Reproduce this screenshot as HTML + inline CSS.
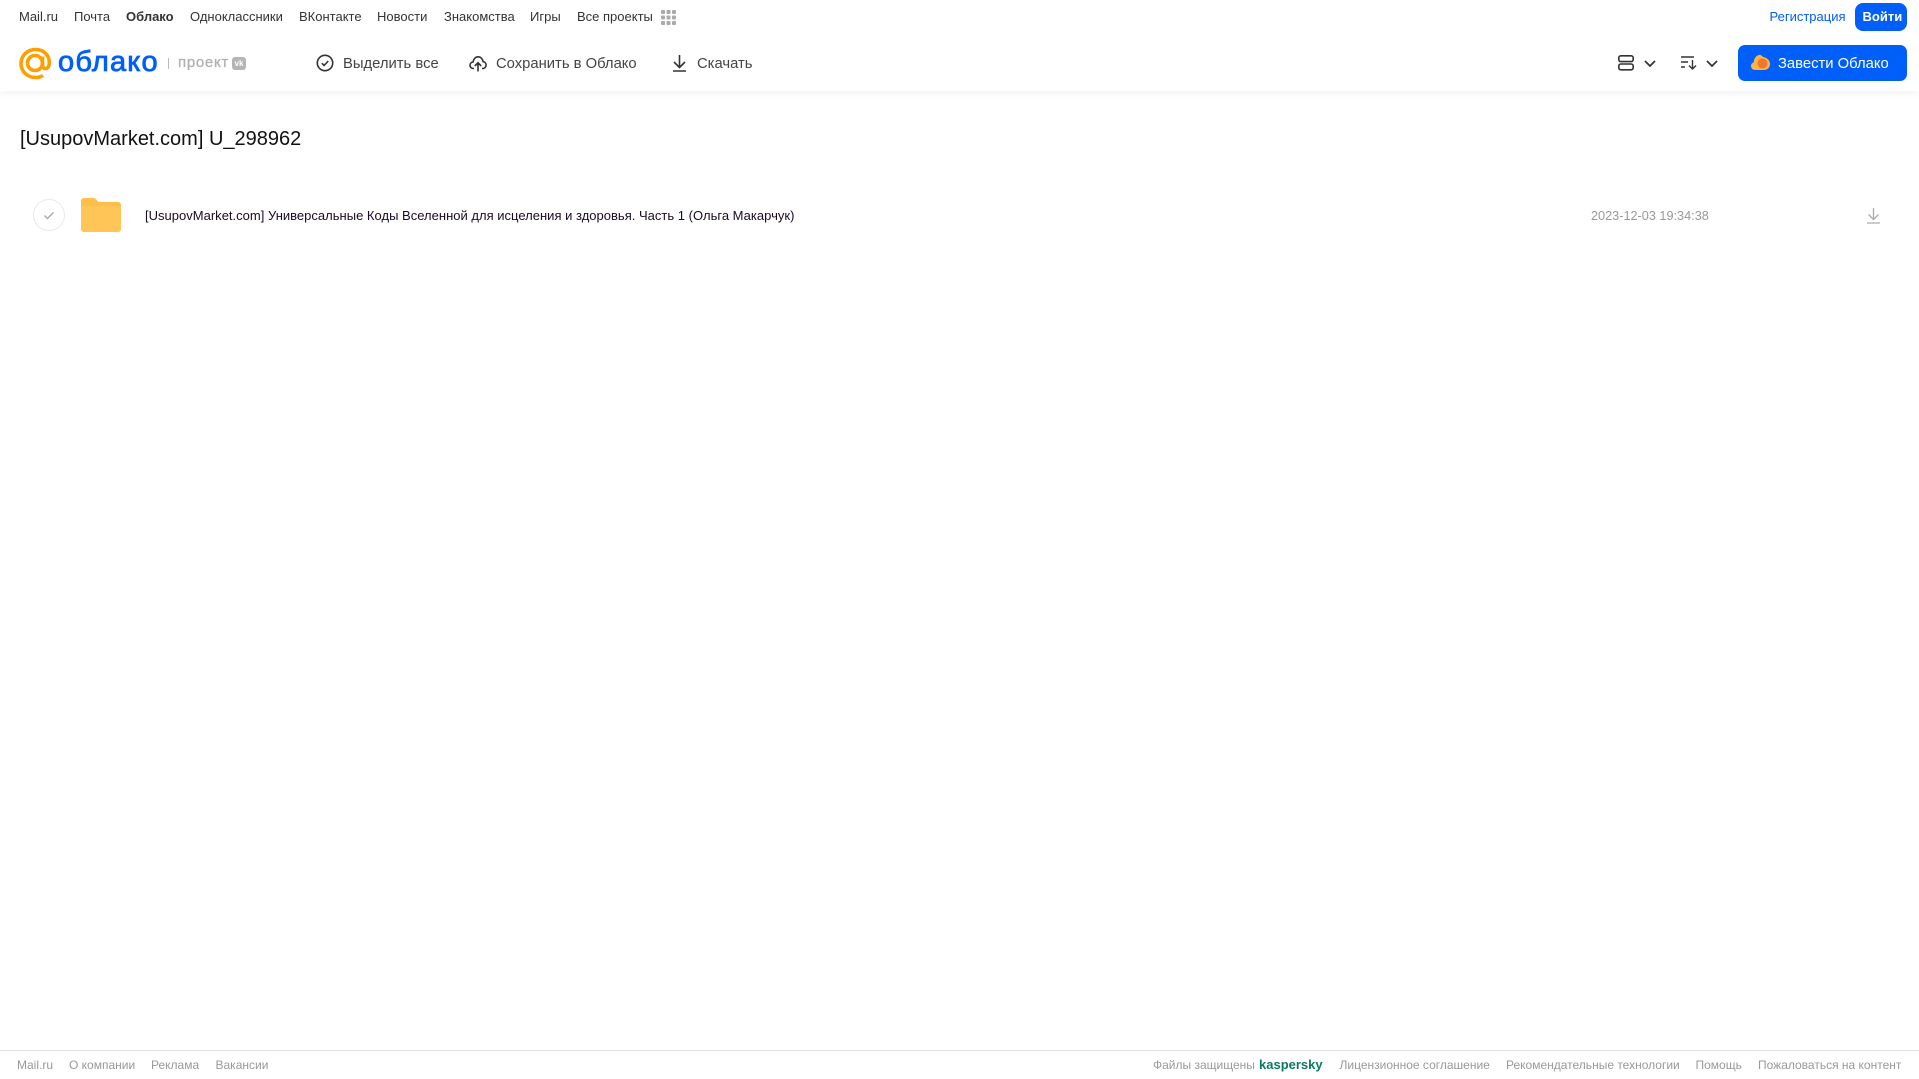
<!DOCTYPE html>
<html lang="ru"><head><meta charset="utf-8"><title>Облако</title>
<style>
html,body{margin:0;padding:0;background:#fff;width:1919px;height:1079px;overflow:hidden;font-family:"Liberation Sans",Arial,sans-serif}
.t{position:absolute;white-space:nowrap;line-height:20px;height:20px}
.n{font-size:13px;color:#333;top:7px}
.b{font-size:14.800px;color:#444;top:54px}
.f{font-size:12px;color:#999;top:1055px}
svg{position:absolute;overflow:visible}
#hd{position:absolute;left:0;top:0;width:1919px;height:91px;background:#fff;box-shadow:0 1px 10px rgba(0,0,0,.07)}
</style></head><body>
<div id="hd"></div>
<span class="t n" style="left:19px">Mail.ru</span>
<span class="t n" style="left:74px">Почта</span>
<span class="t n" style="left:126px;font-weight:bold">Облако</span>
<span class="t n" style="left:190px">Одноклассники</span>
<span class="t n" style="left:299px">ВКонтакте</span>
<span class="t n" style="left:377px">Новости</span>
<span class="t n" style="left:444px">Знакомства</span>
<span class="t n" style="left:530px">Игры</span>
<span class="t n" style="left:577px">Все проекты</span>
<svg style="left:661px;top:10px" width="15" height="15" fill="#aaa"><rect x="0" y="0" width="4" height="4" rx="1"/><rect x="5.500" y="0" width="4" height="4" rx="1"/><rect x="11" y="0" width="4" height="4" rx="1"/><rect x="0" y="5.500" width="4" height="4" rx="1"/><rect x="5.500" y="5.500" width="4" height="4" rx="1"/><rect x="11" y="5.500" width="4" height="4" rx="1"/><rect x="0" y="11" width="4" height="4" rx="1"/><rect x="5.500" y="11" width="4" height="4" rx="1"/><rect x="11" y="11" width="4" height="4" rx="1"/></svg>
<span class="t n" style="left:1769.500px;color:#005ff9">Регистрация</span>
<div style="position:absolute;left:1855px;top:3px;width:52px;height:28px;background:#005ff9;border-radius:8px"></div>
<span class="t n" style="left:1862.500px;color:#fff;font-weight:bold">Войти</span>

<svg style="left:19px;top:47px" width="33" height="33" viewBox="0 0 33 33" fill="none" stroke="#ff9e00" stroke-width="3.600"><circle cx="16" cy="16" r="7.500"/><path d="M23.500 9.500v8.500c0 5 6 5 6.700-1 .8-8.500-5.200-14.500-13.700-14.500C8.500 2.500 2 8.500 2 16.500S8.500 30.500 16.500 30.500c3 0 5.500-.8 7.500-2"/></svg>
<span class="t" style="left:58px;top:45px;height:34px;line-height:34px;font-size:29px;color:#005ff9;-webkit-text-stroke:.8px #005ff9;letter-spacing:1.200px">облако</span>
<div style="position:absolute;left:168px;top:58px;width:1px;height:11px;background:#bbb"></div>
<span class="t" style="left:178px;top:53px;font-size:15px;color:#b0b0b0;-webkit-text-stroke:.3px #b0b0b0;letter-spacing:.7px">проект</span>
<div style="position:absolute;left:232px;top:57px;width:14px;height:13px;background:#b5b5b5;border-radius:3px;color:#fff;font-size:8px;font-weight:bold;line-height:13px;text-align:center">vk</div>

<svg style="left:316px;top:54px" width="18" height="18" viewBox="0 0 18 18" fill="none" stroke="#333" stroke-width="1.600"><circle cx="9" cy="9" r="7.700"/><path d="M5.800 9.200l2.300 2.300 4.200-4.500"/></svg>
<span class="t b" style="left:343px">Выделить все</span>
<svg style="left:469px;top:55px" width="18" height="17" viewBox="0 0 18 17" fill="none" stroke="#333" stroke-width="1.600"><path d="M5 13.500H4.500C2.500 13.500 1 12 1 10.200c0-1.700 1.300-3 3-3.200C4.500 4 6.500 1.800 9 1.800c2.700 0 4.700 2 5.100 4.800 1.700.2 3 1.700 3 3.500 0 1.900-1.500 3.400-3.400 3.400H13"/><path d="M9 16.500V8M5.800 11L9 7.800l3.200 3.200"/></svg>
<span class="t b" style="left:496px">Сохранить в Облако</span>
<svg style="left:671.500px;top:54px" width="15" height="18" viewBox="0 0 15 18" fill="none" stroke="#333" stroke-width="1.600"><path d="M7.500 1v12M2 8l5.500 5.500L13 8M1 17h13"/></svg>
<span class="t b" style="left:697px">Скачать</span>

<svg style="left:1618px;top:55px" width="16" height="16" viewBox="0 0 16 16" fill="none" stroke="#333" stroke-width="1.600"><rect x=".8" y=".8" width="14.400" height="5.800" rx="2"/><rect x=".8" y="9" width="14.400" height="5.800" rx="2"/></svg>
<svg style="left:1644px;top:60px" width="12" height="7" viewBox="0 0 12 7" fill="none" stroke="#333" stroke-width="1.700"><path d="M1 1l5 5 5-5"/></svg>
<svg style="left:1681px;top:56px" width="16" height="14" viewBox="0 0 16 14" fill="none" stroke="#333" stroke-width="1.400"><path d="M0 1h13M0 6h7M0 11h4M11.500 4v9M8 9.500l3.500 3.500L15 9.500"/></svg>
<svg style="left:1706px;top:60px" width="12" height="7" viewBox="0 0 12 7" fill="none" stroke="#333" stroke-width="1.700"><path d="M1 1l5 5 5-5"/></svg>
<div style="position:absolute;left:1738px;top:45px;width:169px;height:36px;background:#005ff9;border-radius:7px"></div>
<svg style="left:1751px;top:54px" width="19" height="16" viewBox="0 0 19 16"><path d="M4 16C1.800 16 0 14.200 0 12c0-1.800 1.100-3.200 2.700-3.800C3 4.500 5 2 7.500 1 9.500.5 11 1.500 12 3c3.500.5 7 3 7 7 0 3.500-2.500 6-6 6z" fill="#ffb340"/><circle cx="11.500" cy="9.500" r="5" fill="#f4762d"/></svg>
<span class="t b" style="left:1778px;color:#fff">Завести Облако</span>

<span class="t" style="left:20px;top:127px;height:24px;line-height:24px;font-size:20px;color:#111">[UsupovMarket.com] U_298962</span>

<div style="position:absolute;left:33px;top:199px;width:30px;height:30px;border:1px solid #e9e9e9;border-radius:50%"></div>
<svg style="left:43px;top:211px" width="12" height="9" viewBox="0 0 12 9" fill="none" stroke="#a5a5a5" stroke-width="1.300"><path d="M1.500 4.500l3 3 6-6"/></svg>
<svg style="left:81px;top:198px" width="40" height="34" viewBox="0 0 40 34"><path d="M0 3a3 3 0 0 1 3-3h9c2 0 3 .8 4 2.500L17 4h20a3 3 0 0 1 3 3v24a3 3 0 0 1-3 3H3a3 3 0 0 1-3-3z" fill="#ffbe4a"/><path d="M0 8h40v23a3 3 0 0 1-3 3H3a3 3 0 0 1-3-3z" fill="#ffc557"/></svg>
<span class="t" style="left:145px;top:206px;font-size:13px;color:#1a0a26;letter-spacing:.01px">[UsupovMarket.com] Универсальные Коды Вселенной для исцеления и здоровья. Часть 1 (Ольга Макарчук)</span>
<span class="t" style="left:1591px;top:206px;font-size:12.700px;color:#999">2023-12-03 19:34:38</span>
<svg style="left:1866.500px;top:207px" width="13" height="17" viewBox="0 0 13 17" fill="none" stroke="#aaa" stroke-width="1.300"><path d="M6.500 1v11M1.500 7.500l5 5 5-5M0 16h13"/></svg>

<div style="position:absolute;left:0;top:1050px;width:1919px;height:1px;background:#ddd"></div>
<span class="t f" style="left:17px">Mail.ru</span>
<span class="t f" style="left:69px">О компании</span>
<span class="t f" style="left:151px">Реклама</span>
<span class="t f" style="left:215.500px">Вакансии</span>
<span class="t f" style="left:1153px">Файлы защищены</span>
<span class="t f" style="left:1259px;font-size:13px;font-weight:bold;color:#0b7a63">kaspersky</span>
<span class="t f" style="left:1339.500px">Лицензионное соглашение</span>
<span class="t f" style="left:1506px">Рекомендательные технологии</span>
<span class="t f" style="left:1695.500px">Помощь</span>
<span class="t f" style="left:1758px">Пожаловаться на контент</span>
</body></html>
